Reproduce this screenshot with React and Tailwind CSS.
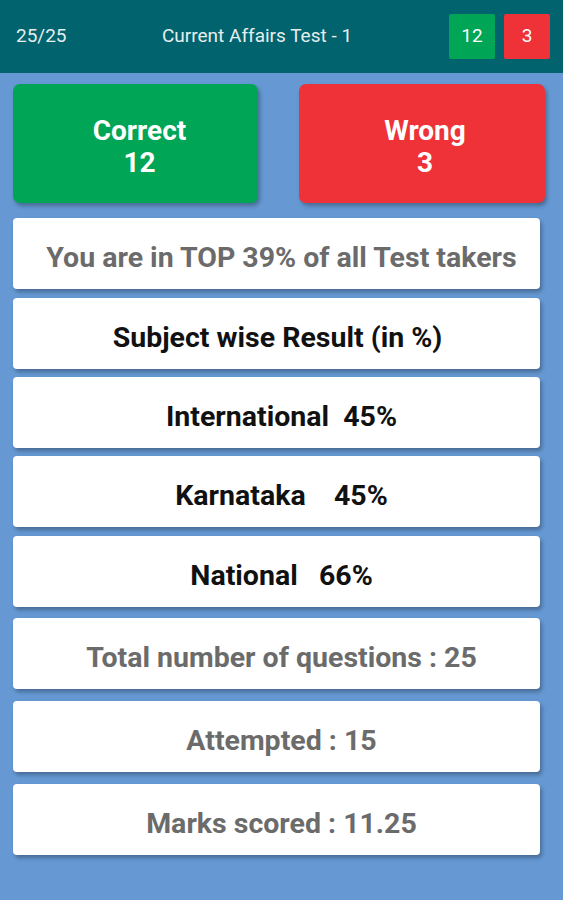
export default function App() {
  const rows = [
    { text: "You are in TOP 39% of all Test takers", tone: "gray", mt: "mt-0", pl: "pl-[10px]" },
    { text: "Subject wise Result (in %)", tone: "black", mt: "mt-[9px]", pl: "pl-[2px]" },
    { text: "International\u00a0\u00a045%", tone: "black", mt: "mt-[8px]", pl: "pl-[10px]" },
    { text: "Karnataka\u00a0\u00a0\u00a0\u00a045%", tone: "black", mt: "mt-[8px]", pl: "pl-[10px]" },
    { text: "National\u00a0\u00a0\u00a066%", tone: "black", mt: "mt-[9px]", pl: "pl-[10px]" },
    { text: "Total number of questions : 25", tone: "gray", mt: "mt-[11px]", pl: "pl-[10px]" },
    { text: "Attempted : 15", tone: "gray", mt: "mt-[12px]", pl: "pl-[10px]" },
    { text: "Marks scored : 11.25", tone: "gray", mt: "mt-[12px]", pl: "pl-[10px]" },
  ];

  return (
    <div className="min-h-[900px] w-[563px] bg-[#6699d4] font-['Roboto',sans-serif]">
      <div className="flex h-[73px] items-center bg-[#00636e] pl-4 pr-[13px] text-[19px] text-[#e6eeee]">
        <span className="w-[146px]">25/25</span>
        <span className="flex-1">Current Affairs Test - 1</span>
        <div className="flex gap-[9px]">
          <div className="flex h-[45px] w-[46px] items-center justify-center rounded-[2px] bg-[#00a556] text-white">12</div>
          <div className="flex h-[45px] w-[46px] items-center justify-center rounded-[2px] bg-[#ee3237] text-white">3</div>
        </div>
      </div>

      <div className="flex justify-between pl-[13px] pr-[18px] pt-[11px]">
        <div className="flex h-[119px] w-[245px] flex-col items-center justify-center rounded-[7px] bg-[#00a556] pl-[8px] pt-[7px] text-[28px] font-bold leading-[32px] text-white shadow-[2px_3px_4px_rgba(0,0,0,0.3)]">
          <span>Correct</span>
          <span>12</span>
        </div>
        <div className="flex h-[119px] w-[246px] flex-col items-center justify-center rounded-[7px] bg-[#ee3237] pl-[6px] pt-[7px] text-[28px] font-bold leading-[32px] text-white shadow-[2px_3px_4px_rgba(0,0,0,0.3)]">
          <span>Wrong</span>
          <span>3</span>
        </div>
      </div>

      <div className="flex flex-col pl-[13px] pr-[23px] pt-[15px]">
        {rows.map((r) => (
          <div
            key={r.text}
            className={`${r.mt} ${r.pl} flex h-[71px] items-center justify-center rounded-[4px] bg-white pt-[9px] text-[28.5px] font-bold shadow-[2px_3px_4px_rgba(0,0,0,0.3)] ${r.tone === "gray" ? "text-[#6b6b6b]" : "text-[#111111]"}`}
          >
            {r.text}
          </div>
        ))}
      </div>
    </div>
  );
}
